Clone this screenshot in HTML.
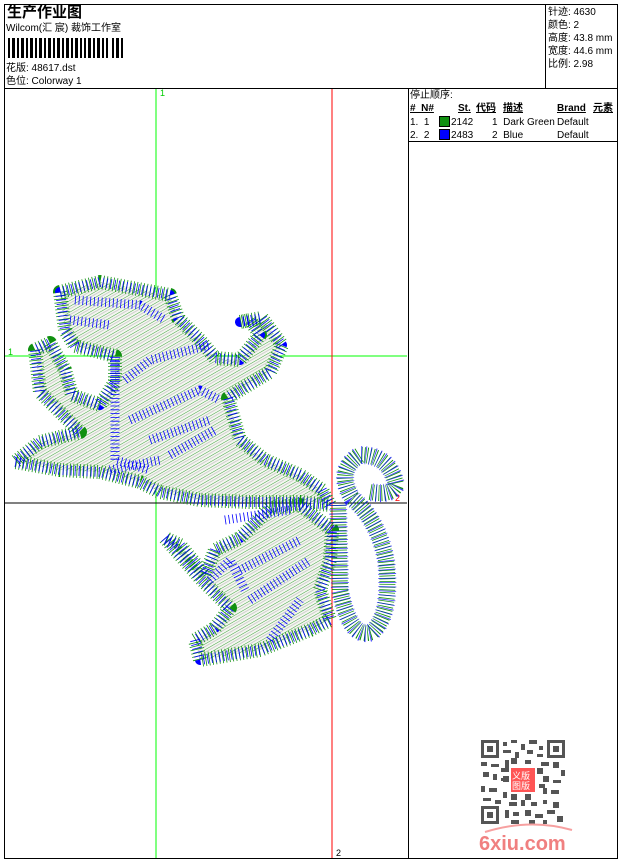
<!DOCTYPE html>
<html><head><meta charset="utf-8"><style>
body{margin:0;width:620px;height:860px;background:#fff;overflow:hidden;font-family:"Liberation Sans","Noto Sans CJK SC",sans-serif;font-size:10px;color:#000}
.a{position:absolute;white-space:nowrap;line-height:11px}
.l{position:absolute;background:#000}
</style></head><body>
<div class="l" style="left:4px;top:4px;width:614px;height:1px"></div>
<div class="l" style="left:4px;top:858px;width:614px;height:1px"></div>
<div class="l" style="left:4px;top:4px;width:1px;height:855px"></div>
<div class="l" style="left:617px;top:4px;width:1px;height:855px"></div>
<div class="l" style="left:4px;top:88px;width:614px;height:1px"></div>
<div class="l" style="left:545px;top:4px;width:1px;height:84px"></div>
<div class="l" style="left:408px;top:88px;width:1px;height:771px"></div>
<div class="l" style="left:408px;top:141px;width:210px;height:1px"></div>
<div class="a" style="left:7px;top:4px;font-size:15px;font-weight:bold;line-height:17px">生产作业图</div>
<div class="a" style="left:6px;top:23px">Wilcom(汇 宸) 裁饰工作室</div>
<svg style="position:absolute;left:8px;top:38px" width="116" height="20">
<g fill="#000">
<rect x="0" y="0" width="2" height="20"/><rect x="4" y="0" width="3" height="20"/><rect x="9" y="0" width="2" height="20"/><rect x="13" y="0" width="3" height="20"/><rect x="18" y="0" width="2" height="20"/><rect x="22" y="0" width="3" height="20"/><rect x="27" y="0" width="2" height="20"/><rect x="31" y="0" width="3" height="20"/><rect x="36" y="0" width="2" height="20"/><rect x="40" y="0" width="3" height="20"/><rect x="45" y="0" width="2" height="20"/><rect x="49" y="0" width="3" height="20"/><rect x="54" y="0" width="2" height="20"/><rect x="58" y="0" width="3" height="20"/><rect x="63" y="0" width="2" height="20"/><rect x="67" y="0" width="3" height="20"/><rect x="72" y="0" width="2" height="20"/><rect x="76" y="0" width="2" height="20"/><rect x="80" y="0" width="3" height="20"/><rect x="85" y="0" width="2" height="20"/><rect x="89" y="0" width="3" height="20"/><rect x="94" y="0" width="2" height="20"/><rect x="98" y="0" width="2" height="20"/><rect x="104" y="0" width="2" height="20"/><rect x="108" y="0" width="3" height="20"/><rect x="113" y="0" width="2" height="20"/>
</g></svg>
<div class="a" style="left:6px;top:63px">花版: 48617.dst</div>
<div class="a" style="left:6px;top:76px">色位: Colorway 1</div>
<div class="a" style="left:548px;top:6px;line-height:13px">针迹: 4630<br>颜色: 2<br>高度: 43.8 mm<br>宽度: 44.6 mm<br>比例: 2.98</div>
<div class="a" style="left:410px;top:90px">停止顺序:</div>
<div class="a" style="left:410px;top:103px;font-weight:bold;text-decoration:underline">#&nbsp; N#</div>
<div class="a" style="left:458px;top:103px;font-weight:bold;text-decoration:underline">St.</div>
<div class="a" style="left:476px;top:103px;font-weight:bold;text-decoration:underline">代码</div>
<div class="a" style="left:503px;top:103px;font-weight:bold;text-decoration:underline">描述</div>
<div class="a" style="left:557px;top:103px;font-weight:bold;text-decoration:underline">Brand</div>
<div class="a" style="left:593px;top:103px;font-weight:bold;text-decoration:underline">元素</div>
<div class="a" style="left:410px;top:117px">1.&nbsp; 1</div>
<div style="position:absolute;left:439px;top:116px;width:9px;height:9px;background:#109010;border:1px solid #000"></div>
<div class="a" style="left:451px;top:117px">2142</div>
<div class="a" style="left:492px;top:117px">1&nbsp; Dark Green</div>
<div class="a" style="left:557px;top:117px">Default</div>
<div class="a" style="left:410px;top:130px">2.&nbsp; 2</div>
<div style="position:absolute;left:439px;top:129px;width:9px;height:9px;background:#0000ff;border:1px solid #000"></div>
<div class="a" style="left:451px;top:130px">2483</div>
<div class="a" style="left:492px;top:130px">2&nbsp; Blue</div>
<div class="a" style="left:557px;top:130px">Default</div>

<svg style="position:absolute;left:0;top:0" width="620" height="860">
<defs>
<pattern id="h" width="5" height="5" patternUnits="userSpaceOnUse" patternTransform="rotate(-30)">
<rect width="5" height="5" fill="#f4f6f0"/><line x1="0" y1="0" x2="5" y2="0" stroke="#2a9a2a" stroke-width="0.9"/><line x1="0" y1="2.5" x2="5" y2="2.5" stroke="#aaa" stroke-width="0.5"/>
</pattern>
</defs>
<line x1="156" y1="89" x2="156" y2="858" stroke="#0f0"/>
<line x1="5" y1="356" x2="407" y2="356" stroke="#0f0"/>
<line x1="332" y1="89" x2="332" y2="858" stroke="#f00"/>
<line x1="5" y1="503" x2="407" y2="503" stroke="#000"/>
<text x="160" y="96" fill="#0c0" font-size="9" font-family="Liberation Sans">1</text>
<text x="8" y="355" fill="#0c0" font-size="9" font-family="Liberation Sans">1</text>
<text x="395" y="501" fill="#f00" font-size="9" font-family="Liberation Sans">2</text>
<text x="336" y="856" fill="#000" font-size="9" font-family="Liberation Sans">2</text>
<g stroke-linejoin="round">
<path id="b" d="M60,292 L100,282 L170,295 L178,318 L200,340 L215,358 L240,360 L260,335 L250,320 L240,322 L262,318 L282,345 L270,372 L240,390 L228,398 L240,440 L265,460 L300,475 L322,490 L330,505 L300,502 L250,502 L200,500 L160,492 L140,482 L100,472 L60,470 L15,462 L40,442 L80,432 L60,412 L40,392 L35,350 L50,343 L65,370 L72,395 L100,405 L115,382 L115,356 L75,346 L65,330 Z" fill="url(#h)" stroke="#109010" stroke-width="14" stroke-dasharray="0.8 2.6"/>
<path d="M165,538 L200,578 L230,608 L215,628 L195,640 L200,660 L260,650 L310,630 L330,620 L320,590 L330,560 L332,530 L300,505 L270,508 L240,538 L215,550 L205,575 L180,545 Z" fill="url(#h)" stroke="#109010" stroke-width="14" stroke-dasharray="0.8 2.6"/>
<path d="M338,505 L340,590 Q350,640 372,632 Q392,615 386,560 Q378,520 352,498 Q335,470 360,455 Q390,455 396,485 Q392,496 370,492" fill="none" stroke="#109010" stroke-width="16" stroke-dasharray="0.8 2"/>
<path d="M338,505 L340,590 Q350,640 372,632 Q392,615 386,560 Q378,520 352,498 Q335,470 360,455 Q390,455 396,485 Q392,496 370,492" fill="none" stroke="#00f" stroke-width="18" stroke-dasharray="0.8 3.5" opacity="0.75"/>
<path d="M60,292 L100,282 L170,295 L178,318 L200,340 L215,358 L240,360 L260,335 L250,320 L240,322 L262,318 L282,345 L270,372 L240,390 L228,398 L240,440 L265,460 L300,475 L322,490 L330,505 L300,502 L250,502 L200,500 L160,492 L140,482 L100,472 L60,470 L15,462 L40,442 L80,432 L60,412 L40,392 L35,350 L50,343 L65,370 L72,395 L100,405 L115,382 L115,356 L75,346 L65,330 Z" fill="none" stroke="#00f" stroke-width="10" stroke-dasharray="0.8 3.2"/>
<path d="M165,538 L200,578 L230,608 L215,628 L195,640 L200,660 L260,650 L310,630 L330,620 L320,590 L330,560 L332,530 L300,505 L270,508 L240,538 L215,550 L205,575 L180,545 Z" fill="none" stroke="#00f" stroke-width="10" stroke-dasharray="0.8 3.2"/>
<path d="M75,300 L140,305 L165,320 M70,320 L110,325 M115,360 L115,460 L150,470 M125,380 L150,360 L210,345 M130,420 L200,390 L220,400 M150,440 L210,420 M170,455 L215,430 M110,470 L160,460 M225,520 L290,510 M210,580 L230,560 L245,590 M240,570 L300,540 M250,600 L310,560 M270,640 L300,600" fill="none" stroke="#00f" stroke-width="9" stroke-dasharray="0.8 3"/>
</g>
<g transform="translate(481,740)">
<rect width="84" height="84" fill="#fff"/>
<g fill="#555">
<rect x="0" y="0" width="18" height="18"/><rect x="66" y="0" width="18" height="18"/><rect x="0" y="66" width="18" height="18"/>
</g>
<g fill="#fff"><rect x="3" y="3" width="12" height="12"/><rect x="69" y="3" width="12" height="12"/><rect x="3" y="69" width="12" height="12"/></g>
<g fill="#555"><rect x="6" y="6" width="6" height="6"/><rect x="72" y="6" width="6" height="6"/><rect x="6" y="72" width="6" height="6"/>
<path d="M22 2h4v4h-4zM30 0h6v3h-6zM40 4h4v6h-4zM48 0h8v4h-8zM58 6h4v4h-4zM22 10h8v3h-8zM34 12h4v6h-4zM46 10h6v4h-6zM56 14h6v3h-6zM0 22h6v4h-6zM10 24h8v3h-8zM24 20h4v8h-4zM60 22h8v4h-8zM72 22h6v6h-6zM80 30h4v6h-4zM2 32h6v5h-6zM12 34h4v6h-4zM20 38h6v3h-6zM62 36h6v6h-6zM72 40h8v3h-8zM0 46h4v6h-4zM8 48h8v4h-8zM22 52h4v6h-4zM62 48h4v6h-4zM70 50h8v4h-8zM2 58h8v3h-8zM14 60h6v4h-6zM28 62h8v4h-8zM40 60h4v6h-4zM50 62h6v4h-6zM62 60h4v4h-4zM72 62h6v6h-6zM24 70h4v8h-4zM32 72h6v4h-6zM44 70h6v6h-6zM54 74h8v4h-8zM66 70h8v4h-8zM76 76h6v6h-6zM30 80h8v4h-8zM48 80h6v4h-6zM62 80h4v4h-4z"/>
<path d="M20 28h8v4h-8zM22 36h6v6h-6zM56 28h6v6h-6zM58 44h6v4h-6zM30 18h6v6h-6zM44 20h6v4h-6zM30 54h6v6h-6zM44 54h6v6h-6z"/></g>
<rect x="30" y="28" width="24" height="24" fill="#f55"/>
<text x="31" y="39" font-size="9" fill="#fff" font-family="Noto Sans CJK SC">义版</text>
<text x="31" y="49" font-size="9" fill="#fff" font-family="Noto Sans CJK SC">图版</text>
</g>
<path d="M485,832 Q530,818 572,830" fill="none" stroke="#f7a0a0" stroke-width="2"/>
<text x="479" y="850" font-size="20" font-weight="bold" fill="#f08080" font-family="Liberation Sans">6xiu.com</text>
</svg>
</body></html>
